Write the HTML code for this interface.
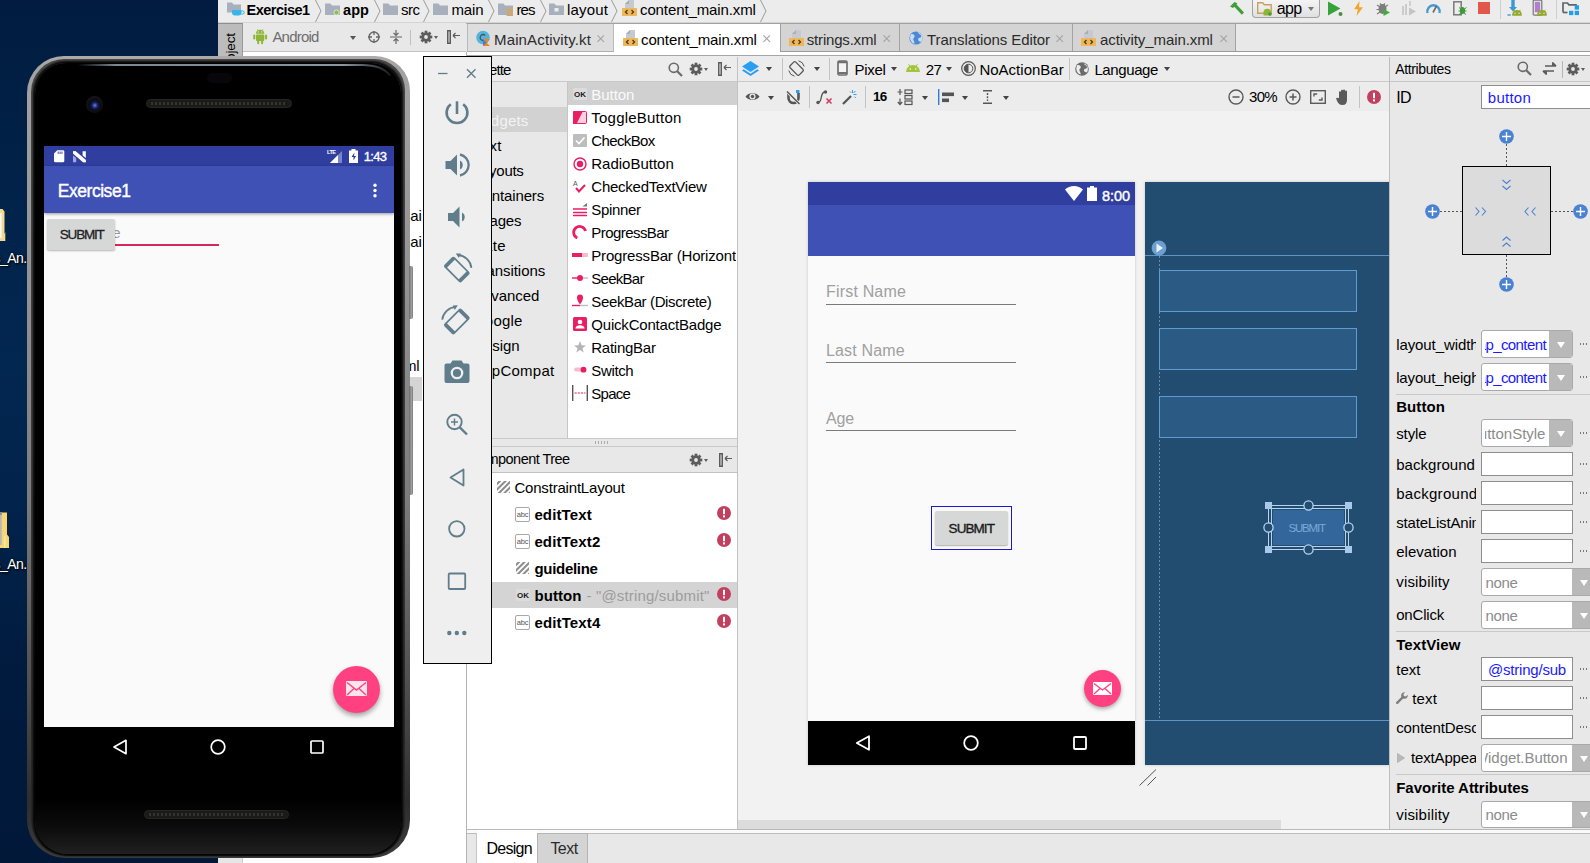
<!DOCTYPE html>
<html lang="en">
<head>
<meta charset="utf-8">
<title>Exercise1 - content_main.xml</title>
<style>
*{box-sizing:border-box;margin:0;padding:0}
html,body{width:1590px;height:863px;overflow:hidden}
body{position:relative;font-family:"Liberation Sans",sans-serif;font-size:15px;color:#000;background:#04214a}
.a{position:absolute}
.t{position:absolute;white-space:nowrap;font-size:15px;line-height:20px;color:#000}
svg{position:absolute;overflow:visible}
.tab{position:absolute;top:23px;height:29px;background:#d4d4d4;border-right:1px solid #a3a3a3;border-top:1px solid #a2a2a2}
.vs{position:absolute;width:1px;background:#c3c3c3}
.hs{position:absolute;height:1px;background:#c3c3c3}
.dd{position:absolute;width:0;height:0;border-left:3.5px solid transparent;border-right:3.5px solid transparent;border-top:4px solid #444}
.inp{position:absolute;background:#fff;border:1px solid #8e8e8e;height:24px}
.cb{position:absolute;background:#fff;border:1px solid #a9a9a9;border-radius:3px;height:28px;overflow:hidden}
.cb i{position:absolute;right:0;top:0;bottom:0;width:24px;background:#b9b9b9}
.cb i:after{content:"";position:absolute;left:7.500px;top:10.500px;border-left:4.500px solid transparent;border-right:4.500px solid transparent;border-top:6px solid #fff}
.dots{position:absolute;width:9px;height:2px;background:repeating-linear-gradient(90deg,#777 0 1px,transparent 1px 3px)}

</style>
</head>
<body>
<div class="a" style="left:0;top:0;width:240px;height:863px;background:linear-gradient(180deg,#011c40 0%,#011e43 8%,#02244c 28%,#022751 42%,#02234b 58%,#011b3e 78%,#011839 100%)"></div><svg style="left:0;top:208px" width="10" height="34" viewBox="0 0 10 34"><path d="M0 1h2.500l2 2.500V26L5.300 24v9H0z" fill="#f3d98c"/><rect x="0" y="5" width="1.600" height="25" fill="#f4f8fc"/></svg><svg style="left:0;top:511px" width="10" height="38" viewBox="0 0 10 38"><path d="M0 1.500h7v22l2 2.500V37H0z" fill="#f7d774"/><path d="M4 37V26.500l1.500-3V37z" fill="#fbe9a6"/><rect x="0" y="1" width="1.800" height="33" fill="#b8b8b8"/><rect x="0" y="1" width="1.800" height="3" fill="#8a8a8a"/></svg><span class="t" style="left:-6.5px;top:248.2px;font-size:14px;color:#fff;letter-spacing:-0.56px;text-shadow:1px 1px 2px #000,0 0 2px #000;">s_An.</span><span class="t" style="left:-6.5px;top:553.6px;font-size:14px;color:#fff;letter-spacing:-0.56px;text-shadow:1px 1px 2px #000,0 0 2px #000;">s_An.</span>
<div class="a" style="left:218px;top:0;width:1372px;height:863px;background:#ececec"></div>
<div class="a" style="left:218px;top:22px;width:1372px;height:1px;background:#d4d4d4"></div>
<svg style="left:227px;top:2px" width="17" height="15" viewBox="0 0 17 15"><path d="M0 0.5h5l1.5 2h7.5v8h-14z" fill="#a7b0bc"/><path d="M5 8h9.5v2.5a3 3 0 0 1-3 3h-3.5a3 3 0 0 1-3-3z" fill="#35b5e8"/><path d="M14.5 9h1.3a1 1 0 0 1 0 3h-1.5" fill="none" stroke="#35b5e8" stroke-width="1"/></svg>
<span class="t" style="left:246.5px;top:-0.0px;font-size:14.5px;font-weight:700;letter-spacing:-0.51px;">Exercise1</span>
<svg style="left:315px;top:0" width="7" height="22" viewBox="0 0 7 22"><path d="M0.5 0 L6 11 L0.5 22" fill="none" stroke="#9a9a9a" stroke-width="1"/></svg>
<svg style="left:324.5px;top:3px" width="15" height="12" viewBox="0 0 15 12"><path d="M0 0.5h5.5l1.5 2h8v9.5h-15z" fill="#a7b0bc"/><circle cx="11.5" cy="9.5" r="2.6" fill="#8bc34a" stroke="#ececec" stroke-width="0.8"/></svg>
<span class="t" style="left:343px;top:-0.0px;font-size:14.5px;font-weight:700;letter-spacing:0.07px;">app</span>
<svg style="left:373.5px;top:0" width="7" height="22" viewBox="0 0 7 22"><path d="M0.5 0 L6 11 L0.5 22" fill="none" stroke="#9a9a9a" stroke-width="1"/></svg>
<svg style="left:383px;top:3px" width="15" height="12" viewBox="0 0 15 12"><path d="M0 0.5h5.5l1.5 2h8v9.5h-15z" fill="#a7b0bc"/></svg>
<span class="t" style="left:401px;top:-0.0px;letter-spacing:-0.50px;">src</span>
<svg style="left:422.5px;top:0" width="7" height="22" viewBox="0 0 7 22"><path d="M0.5 0 L6 11 L0.5 22" fill="none" stroke="#9a9a9a" stroke-width="1"/></svg>
<svg style="left:432.5px;top:3px" width="15" height="12" viewBox="0 0 15 12"><path d="M0 0.5h5.5l1.5 2h8v9.5h-15z" fill="#a7b0bc"/></svg>
<span class="t" style="left:451.5px;top:-0.0px;letter-spacing:-0.13px;">main</span>
<svg style="left:488px;top:0" width="7" height="22" viewBox="0 0 7 22"><path d="M0.5 0 L6 11 L0.5 22" fill="none" stroke="#9a9a9a" stroke-width="1"/></svg>
<svg style="left:498px;top:3px" width="15" height="12" viewBox="0 0 15 12"><path d="M0 0.5h5.5l1.5 2h8v9.5h-15z" fill="#a7b0bc"/><path d="M8.5 6.5h6.5M8.5 8.5h6.5M8.5 10.5h6.5M8.5 12.5h6.5" stroke="#e8a33d" stroke-width="1"/></svg>
<span class="t" style="left:516.4px;top:-0.0px;letter-spacing:-0.81px;">res</span>
<svg style="left:539.5px;top:0" width="7" height="22" viewBox="0 0 7 22"><path d="M0.5 0 L6 11 L0.5 22" fill="none" stroke="#9a9a9a" stroke-width="1"/></svg>
<svg style="left:549px;top:3px" width="15" height="12" viewBox="0 0 15 12"><path d="M0 0.5h5.5l1.5 2h8v9.5h-15z" fill="#a7b0bc"/><rect x="5.5" y="5" width="4" height="3.5" fill="#ececec"/></svg>
<span class="t" style="left:567px;top:-0.0px;letter-spacing:0.16px;">layout</span>
<svg style="left:611px;top:0" width="7" height="22" viewBox="0 0 7 22"><path d="M0.5 0 L6 11 L0.5 22" fill="none" stroke="#9a9a9a" stroke-width="1"/></svg>
<svg style="left:622px;top:0px" width="15" height="16" viewBox="0 0 15 16"><path d="M7 0h5v8h-9v-4z" fill="#c6c9cf"/><path d="M3 4l4-4v4z" fill="#a9adb5"/><rect x="0" y="8" width="15" height="8" fill="#f0b65a"/><path d="M5.5 10 L3.5 12 L5.5 14 M9.5 10 L11.5 12 L9.5 14" fill="none" stroke="#4a3a1a" stroke-width="1.3"/></svg>
<span class="t" style="left:640px;top:-0.0px;letter-spacing:-0.11px;">content_main.xml</span>
<svg style="left:760px;top:0" width="7" height="22" viewBox="0 0 7 22"><path d="M0.5 0 L6 11 L0.5 22" fill="none" stroke="#9a9a9a" stroke-width="1"/></svg>
<svg style="left:1229px;top:1px" width="16" height="15" viewBox="0 0 16 15"><path d="M1 5.5L5.5 1l3 1.5-1 1 7.5 8-2.2 2.2-7.5-8-1.3 1.3z" fill="#3f9e3a"/></svg>
<div class="a" style="left:1252px;top:0;width:68px;height:18px;border:1px solid #a2a2a2;border-top:none;border-radius:0 0 4px 4px;background:linear-gradient(#f4f4f4,#e0e0e0)"></div>
<svg style="left:1257px;top:2px" width="17" height="14" viewBox="0 0 17 14"><path d="M0.7 0.7h5l1.5 2h7v8.6h-13.5z" fill="none" stroke="#c9a063" stroke-width="1.4"/><path d="M6.5 13.5v-3a3.7 3.7 0 0 1 7.4 0v3z" fill="#8fb536"/><circle cx="13" cy="12" r="1.8" fill="#4e9a34"/></svg>
<span class="t" style="left:1276.8px;top:-1.0px;font-size:16px;letter-spacing:-0.67px;">app</span>
<i class="dd" style="left:1307.5px;top:7px;border-top-color:#777"></i>
<svg style="left:1327px;top:1px" width="17" height="16" viewBox="0 0 17 16"><path d="M1 0.5L13.5 7.5L1 14.5z" fill="#35a33a"/><circle cx="13.5" cy="13" r="2" fill="#4b8d3e"/></svg>
<svg style="left:1353px;top:1px" width="11" height="15" viewBox="0 0 11 15"><path d="M6.5 0L1 8.3h3.8L3.5 15L10 6.2H6z" fill="#f2a52c"/></svg>
<svg style="left:1376px;top:1px" width="15" height="15" viewBox="0 0 15 15"><ellipse cx="6.5" cy="8" rx="4" ry="5" fill="#7d7d7d"/><path d="M1 4l3 2M12 4l-3 2M0.5 8.5h3M1 13l3-2M4 2.5l1.5 1.5M9 2.5L7.5 4" stroke="#7d7d7d" stroke-width="1.2"/><path d="M7.5 8L14 11.5L7.5 15z" fill="#3fae3f"/></svg>
<svg style="left:1402px;top:1px" width="15" height="15" viewBox="0 0 15 15"><path d="M1 5v9M4 3v11" stroke="#c4c4c4" stroke-width="1.6"/><path d="M7 6.5L14 10.5L7 14.5z" fill="#c4c4c4"/><path d="M8 0v5" stroke="#c4c4c4" stroke-width="1.4"/></svg>
<svg style="left:1426px;top:2px" width="15" height="12" viewBox="0 0 15 12"><path d="M1.5 11a6.2 6.2 0 1 1 12 0" fill="none" stroke="#4897d0" stroke-width="2.4"/><path d="M7 10.5L10.5 4" stroke="#6a6a6a" stroke-width="1.6"/></svg>
<svg style="left:1453px;top:1px" width="14" height="15" viewBox="0 0 14 15"><rect x="0.8" y="0.8" width="7.4" height="13" fill="none" stroke="#7a7a7a" stroke-width="1.5"/><ellipse cx="9.5" cy="9.5" rx="2.6" ry="3.6" fill="#3d9b3a"/><path d="M6 6.5l2 1.5M13.5 6.5l-2 1.5M5.5 10h2M13.5 10h-2M6 13.5l2-1.5M13 13.5l-2-1.5" stroke="#3d9b3a" stroke-width="1"/></svg>
<div class="a" style="left:1478px;top:2px;width:12px;height:12px;background:#e0574c"></div>
<div class="vs" style="left:1500px;top:0;height:19px;background:#cfcfcf"></div>
<svg style="left:1507px;top:0" width="16" height="17" viewBox="0 0 16 17"><path d="M4.300 0h3.400v7h2.300L6 11.500 2 7h2.300z" fill="#3b97d6"/><path d="M.5 15h3.200" stroke="#3b97d6" stroke-width="1.400"/><path d="M5.200 15.800v-1.300a4.800 4.600 0 0 1 9.600 0v1.300z" fill="#94a82e"/><path d="M6.600 9.800l1.200 1.500M13.400 9.800l-1.200 1.500" stroke="#94a82e" stroke-width=".9"/><circle cx="8" cy="13.300" r=".7" fill="#ececec"/><circle cx="12" cy="13.300" r=".7" fill="#ececec"/></svg>
<svg style="left:1532px;top:0" width="16" height="17" viewBox="0 0 16 17"><rect x="1.200" y=".2" width="8.600" height="15" rx="1" fill="none" stroke="#777" stroke-width="1.200"/><rect x="2.800" y="1.800" width="5.400" height="10.500" fill="#b07fcf"/><path d="M5.200 15.800v-1.300a4.800 4.600 0 0 1 9.600 0v1.300z" fill="#94a82e"/><path d="M6.600 9.800l1.200 1.500M13.400 9.800l-1.200 1.500" stroke="#94a82e" stroke-width=".9"/><circle cx="8" cy="13.300" r=".7" fill="#ececec"/><circle cx="12" cy="13.300" r=".7" fill="#ececec"/></svg>
<div class="vs" style="left:1556px;top:0;height:19px;background:#cfcfcf"></div>
<svg style="left:1562px;top:2px" width="18" height="14" viewBox="0 0 18 14"><path d="M1 10.500V1h4.500l1.400 1.800H14v2.500" fill="none" stroke="#5f646b" stroke-width="1.700"/><path d="M1 10.500h4.500" stroke="#5f646b" stroke-width="1.700"/><rect x="7" y="8.800" width="4.300" height="4.300" fill="#1f9fe8"/><rect x="12.700" y="8.800" width="4.300" height="4.300" fill="#1f9fe8"/><rect x="12.700" y="3.300" width="4.300" height="4.300" fill="#1f9fe8"/></svg>
<div class="a" style="left:218px;top:23px;width:1372px;height:29px;background:#e8e8e8"></div>
<div class="a" style="left:218px;top:23px;width:25px;height:840px;background:#e6e6e6;border-right:1px solid #cdcdcd"></div>
<div class="a" style="left:218px;top:23px;width:25px;height:100px;background:#bcbcbc;border-top:1px solid #8e8e8e;border-right:1px solid #9a9a9a"></div>
<div class="a" style="left:243px;top:23px;width:224px;height:1px;background:#b2b2b2"></div>
<span class="t" style="left:220.500px;top:88.500px;font-size:13.500px;transform:rotate(-90deg);transform-origin:0 0;letter-spacing:-0.1px">1: Project</span>
<div class="a" style="left:243px;top:23px;width:223px;height:29px;background:#e8e8e8;border-bottom:1px solid #c2c2c2"></div>
<svg style="left:252.800px;top:28.500px" width="14.300" height="15.700" viewBox="0 0 15 17"><path d="M3 5.2a4.5 4.3 0 0 1 9 0z" fill="#8fb536"/><rect x="3" y="6" width="9" height="7" rx="1" fill="#8fb536"/><rect x="0" y="6" width="2.2" height="5.5" rx="1.1" fill="#8fb536"/><rect x="12.8" y="6" width="2.2" height="5.5" rx="1.1" fill="#8fb536"/><rect x="4.3" y="12" width="2.2" height="4.5" rx="1.1" fill="#8fb536"/><rect x="8.5" y="12" width="2.2" height="4.5" rx="1.1" fill="#8fb536"/><path d="M4.5 0.3l1.2 1.8M10.5 0.3L9.3 2.1" stroke="#8fb536" stroke-width="0.8"/><circle cx="5.600" cy="3.200" r=".7" fill="#e8e8e8"/><circle cx="9.400" cy="3.200" r=".7" fill="#e8e8e8"/></svg>
<span class="t" style="left:272.4px;top:27.4px;color:#6e6e6e;letter-spacing:-0.80px;">Android</span>
<i class="dd" style="left:350px;top:36px;border-top-color:#555"></i>
<svg style="left:368px;top:31px" width="12" height="12" viewBox="0 0 12 12"><circle cx="6" cy="6" r="5" fill="none" stroke="#666" stroke-width="1.4"/><path d="M6 0v4M6 8v4M0 6h4M8 6h4" stroke="#666" stroke-width="1.3"/></svg>
<svg style="left:390px;top:30px" width="12" height="14" viewBox="0 0 12 14"><path d="M0 7h12M6 0v5M6 14v-5M3.5 2.8L6 5.3L8.5 2.8M3.5 11.2L6 8.7l2.5 2.5" stroke="#666" stroke-width="1.2" fill="none"/></svg>
<div class="vs" style="left:410px;top:30px;height:15px;background:#c0c0c0"></div>
<svg style="left:418.5px;top:30px" width="14" height="14" viewBox="-7 -7 14 14"><g fill="#5c5c5c"><rect x="-1.4" y="-6.3" width="2.8" height="3" transform="rotate(0)"/><rect x="-1.4" y="-6.3" width="2.8" height="3" transform="rotate(45)"/><rect x="-1.4" y="-6.3" width="2.8" height="3" transform="rotate(90)"/><rect x="-1.4" y="-6.3" width="2.8" height="3" transform="rotate(135)"/><rect x="-1.4" y="-6.3" width="2.8" height="3" transform="rotate(180)"/><rect x="-1.4" y="-6.3" width="2.8" height="3" transform="rotate(225)"/><rect x="-1.4" y="-6.3" width="2.8" height="3" transform="rotate(270)"/><rect x="-1.4" y="-6.3" width="2.8" height="3" transform="rotate(315)"/><circle r="4.6"/></g><circle r="1.9" fill="#e8e8e8"/></svg><i class="dd" style="left:433.5px;top:36px;border-left-width:2.5px;border-right-width:2.5px;border-top-width:3px;border-top-color:#5c5c5c"></i>
<svg style="left:447px;top:30px" width="13" height="14" viewBox="0 0 13 14"><rect x="0.75" y="0.75" width="2.5" height="12.5" fill="none" stroke="#5c5c5c" stroke-width="1.5"/><path d="M6 5.5h7M6 5.5l2.5-2.5M6 5.5l2.5 2.5" stroke="#5c5c5c" stroke-width="1.2" fill="none"/></svg>
<div class="tab" style="left:467px;width:147px;background:#dedede;border-left:1px solid #b9b9b9;border-right-color:#b9b9b9"></div>
<div class="tab" style="left:614px;width:166px;background:#fff;border-right:none;border-top-color:#a2a2a2;height:32px"></div>
<div class="tab" style="left:780px;width:120px;border-left:1px solid #a3a3a3"></div>
<div class="tab" style="left:900px;width:173px"></div>
<div class="tab" style="left:1073px;width:163px"></div>
<div class="a" style="left:467px;top:51px;width:147px;height:1px;background:#b0b0b0"></div>
<div class="a" style="left:780px;top:51px;width:810px;height:1px;background:#9b9b9b"></div>
<div class="a" style="left:467px;top:52px;width:1123px;height:3px;background:#fff"></div>
<div class="a" style="left:467px;top:23px;width:1123px;height:1px;background:#a2a2a2"></div>
<div class="a" style="left:467px;top:55px;width:1123px;height:1px;background:#a6a6a6"></div>
<svg style="left:476px;top:30px" width="15" height="16" viewBox="0 0 15 16"><circle cx="7" cy="7.5" r="6.8" fill="#56b4d9"/><path d="M9.3 5.4a3 3 0 1 0 0 4.2" fill="none" stroke="#3d5a66" stroke-width="1.3"/><path d="M7 16v-7h7l-3.5 3.5L14 16z" fill="#f58220"/><path d="M7 16l3.5-3.5L7 9z" fill="#3f7fe0"/></svg>
<span class="t" style="left:494px;top:29.9px;color:#2b2b2b;letter-spacing:0.15px;">MainActivity.kt</span>
<svg style="left:597.2px;top:34.7px" width="7.400" height="7.400" viewBox="0 0 8 8"><path d="M0.500 0.500L7.500 7.500M7.500 0.500L0.500 7.500" stroke="#a4a4a4" stroke-width="1.200"/></svg>
<svg style="left:622.5px;top:30px" width="15" height="16" viewBox="0 0 15 16"><path d="M7 0h5v8h-9v-4z" fill="#c6c9cf"/><path d="M3 4l4-4v4z" fill="#a9adb5"/><rect x="0" y="8" width="15" height="8" fill="#f0b65a"/><path d="M5.5 10 L3.5 12 L5.5 14 M9.5 10 L11.5 12 L9.5 14" fill="none" stroke="#4a3a1a" stroke-width="1.3"/></svg>
<span class="t" style="left:641px;top:29.9px;letter-spacing:-0.11px;">content_main.xml</span>
<svg style="left:763.2px;top:34.7px" width="7.400" height="7.400" viewBox="0 0 8 8"><path d="M0.500 0.500L7.500 7.500M7.500 0.500L0.500 7.500" stroke="#a4a4a4" stroke-width="1.200"/></svg>
<svg style="left:788.5px;top:30px" width="15" height="16" viewBox="0 0 15 16"><path d="M7 0h5v8h-9v-4z" fill="#c6c9cf"/><path d="M3 4l4-4v4z" fill="#a9adb5"/><rect x="0" y="8" width="15" height="8" fill="#f0b65a"/><path d="M5.5 10 L3.5 12 L5.5 14 M9.5 10 L11.5 12 L9.5 14" fill="none" stroke="#4a3a1a" stroke-width="1.3"/></svg>
<span class="t" style="left:806.8px;top:29.9px;color:#2b2b2b;letter-spacing:-0.19px;">strings.xml</span>
<svg style="left:883.2px;top:34.7px" width="7.400" height="7.400" viewBox="0 0 8 8"><path d="M0.500 0.500L7.500 7.500M7.500 0.500L0.500 7.500" stroke="#a4a4a4" stroke-width="1.200"/></svg>
<svg style="left:909px;top:31px" width="14" height="14" viewBox="0 0 14 14"><circle cx="7" cy="7" r="6.600" fill="#4a8ad4"/><path d="M2 3.200c1.800-.4 3.600.4 3.600 2S3.800 7 4.200 8.600s1.600 2 1.200 4.200C3 12 1 9.500 1 7c0-1.500.4-2.800 1-3.800zM8.500 1c1 .8 1 1.800 2.200 2.200s2 1.600 1.400 2.800-2.200.2-2.800 1.600.2 2.400 1.400 2.800 1.200.8 1.600.4C13 9.500 13.600 8.300 13.600 7 13.600 3.800 11.300 1.300 8.500 1z" fill="#c9dcf3"/></svg>
<span class="t" style="left:927px;top:29.9px;color:#2b2b2b;letter-spacing:-0.08px;">Translations Editor</span>
<svg style="left:1056.2px;top:34.7px" width="7.400" height="7.400" viewBox="0 0 8 8"><path d="M0.500 0.500L7.500 7.500M7.500 0.500L0.500 7.500" stroke="#a4a4a4" stroke-width="1.200"/></svg>
<svg style="left:1081px;top:30px" width="15" height="16" viewBox="0 0 15 16"><path d="M7 0h5v8h-9v-4z" fill="#c6c9cf"/><path d="M3 4l4-4v4z" fill="#a9adb5"/><rect x="0" y="8" width="15" height="8" fill="#f0b65a"/><path d="M5.5 10 L3.5 12 L5.5 14 M9.5 10 L11.5 12 L9.5 14" fill="none" stroke="#4a3a1a" stroke-width="1.3"/></svg>
<span class="t" style="left:1100px;top:29.9px;color:#2b2b2b;letter-spacing:-0.08px;">activity_main.xml</span>
<svg style="left:1220.2px;top:34.7px" width="7.400" height="7.400" viewBox="0 0 8 8"><path d="M0.500 0.500L7.500 7.500M7.500 0.500L0.500 7.500" stroke="#a4a4a4" stroke-width="1.200"/></svg>
<div class="a" style="left:467px;top:56px;width:1123px;height:25px;background:#ececec"></div>
<div class="hs" style="left:467px;top:81px;width:923px;background:#c9c9c9"></div>
<div class="a" style="left:738px;top:82px;width:652px;height:29px;background:#ececec"></div>
<div class="hs" style="left:738px;top:110.500px;width:652px;background:#cacaca"></div>
<span class="t" style="left:470px;top:60.1px;letter-spacing:-0.89px;">Palette</span>
<svg style="left:667.5px;top:62px" width="15" height="15" viewBox="0 0 15 15"><circle cx="5.8" cy="5.8" r="4.6" fill="none" stroke="#6a6a6a" stroke-width="1.6"/><path d="M9.2 9.2L14 14" stroke="#6a6a6a" stroke-width="2.2"/></svg>
<svg style="left:689px;top:62px" width="14" height="14" viewBox="-7 -7 14 14"><g fill="#5c5c5c"><rect x="-1.4" y="-6.3" width="2.8" height="3" transform="rotate(0)"/><rect x="-1.4" y="-6.3" width="2.8" height="3" transform="rotate(45)"/><rect x="-1.4" y="-6.3" width="2.8" height="3" transform="rotate(90)"/><rect x="-1.4" y="-6.3" width="2.8" height="3" transform="rotate(135)"/><rect x="-1.4" y="-6.3" width="2.8" height="3" transform="rotate(180)"/><rect x="-1.4" y="-6.3" width="2.8" height="3" transform="rotate(225)"/><rect x="-1.4" y="-6.3" width="2.8" height="3" transform="rotate(270)"/><rect x="-1.4" y="-6.3" width="2.8" height="3" transform="rotate(315)"/><circle r="4.6"/></g><circle r="1.9" fill="#e8e8e8"/></svg><i class="dd" style="left:704px;top:68px;border-left-width:2.5px;border-right-width:2.5px;border-top-width:3px;border-top-color:#5c5c5c"></i>
<svg style="left:718px;top:62px" width="13" height="14" viewBox="0 0 13 14"><rect x="0.75" y="0.75" width="2.5" height="12.5" fill="none" stroke="#5c5c5c" stroke-width="1.5"/><path d="M6 5.5h7M6 5.5l2.5-2.5M6 5.5l2.5 2.5" stroke="#5c5c5c" stroke-width="1.2" fill="none"/></svg>
<svg style="left:742px;top:61px" width="17" height="15" viewBox="0 0 17 15"><path d="M8.5 0L17 5.500L8.5 11L0 5.500z" fill="#2a9df4"/><path d="M1.700 8.300L8.500 12.700l6.800-4.400L17 9.400 8.5 15 0 9.400z" fill="#2a9df4"/></svg>
<i class="dd" style="left:766px;top:67px;border-top-color:#444"></i>
<div class="vs" style="left:782px;top:58px;height:22px"></div>
<svg style="left:788px;top:60px" width="17" height="17" viewBox="0 0 17 17"><rect x="4.5" y="2" width="8" height="13" rx="1.5" fill="none" stroke="#555" stroke-width="1.3" transform="rotate(-45 8.5 8.5)"/><path d="M10.500 .8a7.500 7.500 0 0 1 5.700 5.700M6.500 16.200a7.500 7.500 0 0 1-5.700-5.700" fill="none" stroke="#555" stroke-width="1"/></svg>
<i class="dd" style="left:813.5px;top:67px;border-top-color:#444"></i>
<div class="vs" style="left:829px;top:58px;height:22px"></div>
<svg style="left:837px;top:60px" width="11" height="16" viewBox="0 0 11 16"><rect x="1" y="1" width="9" height="14" rx="1.200" fill="#f4f4f4" stroke="#707070" stroke-width="1.700"/><path d="M1 2.200h9M1 13h9" stroke="#707070" stroke-width="2.200"/></svg>
<span class="t" style="left:854.6px;top:60.1px;letter-spacing:-0.32px;">Pixel</span>
<i class="dd" style="left:890.5px;top:67px;border-top-color:#444"></i>
<svg style="left:906px;top:64px" width="14" height="8" viewBox="0 0 14 8"><path d="M0 8a7 7 0 0 1 14 0z" fill="#a3c43c"/><path d="M2.500 .2l1.700 2M11.500 .2l-1.700 2" stroke="#a3c43c" stroke-width="1"/><circle cx="4.300" cy="5" r=".8" fill="#fff"/><circle cx="9.700" cy="5" r=".8" fill="#fff"/></svg>
<span class="t" style="left:925.8px;top:60.1px;letter-spacing:-0.74px;">27</span>
<i class="dd" style="left:946px;top:67px;border-top-color:#444"></i>
<svg style="left:961px;top:61px" width="15" height="15" viewBox="0 0 15 15"><circle cx="7.500" cy="7.500" r="6.800" fill="none" stroke="#555" stroke-width="1.200"/><circle cx="7.500" cy="7.500" r="4.300" fill="none" stroke="#555" stroke-width="1"/><path d="M7.500 3.200a4.300 4.300 0 0 0 0 8.600z" fill="#555"/></svg>
<span class="t" style="left:979.4px;top:60.1px;letter-spacing:0.01px;">NoActionBar</span>
<div class="vs" style="left:1069px;top:58px;height:22px"></div>
<svg style="left:1075px;top:61.500px" width="14" height="14" viewBox="0 0 14 14"><circle cx="7" cy="7" r="6.800" fill="#6b6b6b"/><path d="M2.200 3c1.800-.4 3.600.4 3.600 2S4 6.800 4.400 8.400s1.600 2 1.200 4.200C3.200 11.800 1.300 9.500 1.300 7c0-1.500.3-2.800.9-4zM8.500 1.300c1 .8 1 1.600 2 2s1.800 1.500 1.300 2.600-2 .2-2.600 1.500.2 2.300 1.300 2.600 1.100.8 1.500.4C12.600 9.500 12.900 8.300 12.900 7c0-3-1.800-5.300-4.400-5.700z" fill="#ececec"/></svg>
<span class="t" style="left:1094.4px;top:60.1px;letter-spacing:-0.39px;">Language</span>
<i class="dd" style="left:1163.5px;top:67px;border-top-color:#444"></i>
<div class="a" style="left:0;top:.8px;width:0;height:0">
<svg style="left:745px;top:90px" width="15" height="11" viewBox="0 0 15 11"><path d="M0.500 5.500C3 1 12 1 14.500 5.500 12 10 3 10 .500 5.500z" fill="#555"/><circle cx="7.500" cy="5.500" r="3.100" fill="#ececec"/><circle cx="7.500" cy="5.500" r="1.700" fill="#555"/></svg>
<i class="dd" style="left:768px;top:95px;border-top-color:#444"></i>
<svg style="left:786px;top:88px" width="15" height="16" viewBox="0 0 15 16"><path d="M2.500 4v5a5 5 0 0 0 10 0V4" fill="none" stroke="#555" stroke-width="2.600"/><path d="M0.500 2L14 15.500" stroke="#ececec" stroke-width="3"/><path d="M1 2.500L13.500 15" stroke="#555" stroke-width="1.400"/><rect x="10" y="1" width="3.500" height="3" fill="#2a9df4"/></svg>
<div class="vs" style="left:809px;top:85px;height:22px"></div>
<svg style="left:816px;top:88px" width="18" height="16" viewBox="0 0 18 16"><path d="M2 13.500c5 0 1.500-10.500 7-10.500" fill="none" stroke="#555" stroke-width="1.300"/><circle cx="2" cy="13.500" r="1.700" fill="#555"/><circle cx="9.500" cy="3" r="1.700" fill="#555"/><path d="M10.500 9.500l5 5M15.500 9.500l-5 5" stroke="#d4365c" stroke-width="1.500"/></svg>
<svg style="left:842px;top:88px" width="15" height="16" viewBox="0 0 15 16"><path d="M1 15L9 7" stroke="#555" stroke-width="2.300"/><path d="M10.500 1v3M14.500 5.500h-3M13.500 2l-2 2M8 2.500l1.200 1.200M13.800 9l-1.300-1.300" stroke="#2a9df4" stroke-width="1"/></svg>
<div class="vs" style="left:865px;top:85px;height:22px"></div>
<span class="t" style="left:873px;top:86.5px;font-size:13.5px;font-weight:700;letter-spacing:-0.77px;">16</span>
<svg style="left:897px;top:88px" width="16" height="16" viewBox="0 0 16 16"><path d="M3 0v6M0.500 3h5M3 9.500v6M.8 13L3 15.500 5.200 13M.8 12" stroke="#555" stroke-width="1.200" fill="none"/><rect x="8" y="1" width="7" height="3.500" fill="none" stroke="#555" stroke-width="1.200"/><rect x="8" y="6.500" width="7" height="3.500" fill="none" stroke="#555" stroke-width="1.200"/><rect x="8" y="12" width="7" height="3.500" fill="none" stroke="#555" stroke-width="1.200"/></svg>
<i class="dd" style="left:921.5px;top:95px;border-top-color:#444"></i>
<svg style="left:938px;top:88px" width="17" height="16" viewBox="0 0 17 16"><path d="M0.700 0v16" stroke="#2a7fd4" stroke-width="1.400"/><rect x="4" y="3.500" width="12" height="3.600" fill="#555"/><rect x="4" y="9.500" width="7" height="3.600" fill="#555"/></svg>
<i class="dd" style="left:962px;top:95px;border-top-color:#444"></i>
<svg style="left:982px;top:89px" width="11" height="14" viewBox="0 0 11 14"><path d="M1 .800h9M1 13.200h9" stroke="#555" stroke-width="1.600"/><path d="M5.500 3v8" stroke="#555" stroke-width="1.400" stroke-dasharray="2 1.300"/></svg>
<i class="dd" style="left:1003px;top:95px;border-top-color:#444"></i>
<svg style="left:1228px;top:88px" width="16" height="16" viewBox="0 0 16 16"><circle cx="8" cy="8" r="7" fill="none" stroke="#5a5a5a" stroke-width="1.400"/><path d="M4.500 8h7" stroke="#5a5a5a" stroke-width="1.500"/></svg>
<span class="t" style="left:1249px;top:86.5px;letter-spacing:-0.68px;">30%</span>
<svg style="left:1285px;top:88px" width="16" height="16" viewBox="0 0 16 16"><circle cx="8" cy="8" r="7" fill="none" stroke="#5a5a5a" stroke-width="1.400"/><path d="M4.500 8h7M8 4.500v7" stroke="#5a5a5a" stroke-width="1.500"/></svg>
<svg style="left:1310px;top:89px" width="16" height="14" viewBox="0 0 16 14"><rect x=".7" y=".7" width="14.600" height="12.600" fill="none" stroke="#5a5a5a" stroke-width="1.400"/><path d="M4 6.500V4h3.200M12 7.500V10H8.800" fill="none" stroke="#5a5a5a" stroke-width="1.400"/></svg>
<svg style="left:1336px;top:88px" width="14" height="16" viewBox="0 0 14 16"><path d="M3 9V3.200a1 1 0 0 1 2 0V1.800a1 1 0 0 1 2 0v-.3a1 1 0 0 1 2 0v1a1 1 0 0 1 2 0V11c0 3-1.500 5-4.500 5S2.500 14.500 1 12L.2 9.800a1 1 0 0 1 1.700-.8z" fill="#5a5a5a"/></svg>
<div class="vs" style="left:1359px;top:85px;height:22px"></div>
<svg style="left:1367px;top:89px" width="14" height="14" viewBox="0 0 14 14"><circle cx="7" cy="7" r="7" fill="#c2405f"/><rect x="6" y="2.800" width="2" height="5.400" fill="#fff"/><rect x="6" y="9.400" width="2" height="2" fill="#fff"/></svg>
</div>
<div class="a" style="left:467px;top:82px;width:270px;height:747px;background:#fff"></div>
<div class="vs" style="left:466px;top:52px;height:811px;background:#b4b4b4"></div>
<div class="vs" style="left:737px;top:57px;height:772px;background:#c2c2c2"></div>
<div class="a" style="left:467px;top:82px;width:100px;height:356px;background:#e8e8e8"></div>
<div class="vs" style="left:567px;top:82px;height:356px;background:#c6c6c6"></div>
<div class="a" style="left:467px;top:107px;width:100px;height:25px;background:#d2d2d2"></div>
<span class="t" style="left:473px;top:110.9px;color:#f4f4f4;letter-spacing:0.19px;">Widgets</span>
<span class="t" style="left:473px;top:135.8px;letter-spacing:0.27px;">Text</span>
<span class="t" style="left:473px;top:160.8px;letter-spacing:-0.28px;">Layouts</span>
<span class="t" style="left:473px;top:185.8px;letter-spacing:-0.15px;">Containers</span>
<span class="t" style="left:473px;top:211.0px;letter-spacing:-0.12px;">Images</span>
<span class="t" style="left:473px;top:236.0px;letter-spacing:0.28px;">Date</span>
<span class="t" style="left:473px;top:260.9px;letter-spacing:-0.06px;">Transitions</span>
<span class="t" style="left:473px;top:285.9px;letter-spacing:-0.04px;">Advanced</span>
<span class="t" style="left:473px;top:311.0px;letter-spacing:0.19px;">Google</span>
<span class="t" style="left:473px;top:336.1px;letter-spacing:-0.00px;">Design</span>
<span class="t" style="left:473px;top:361.2px;letter-spacing:0.24px;">AppCompat</span>
<div class="a" style="left:568px;top:82px;width:169px;height:23px;background:#d0d0d0"></div>
<svg style="left:573px;top:88px" width="14" height="12" viewBox="0 0 14 12"><rect width="14" height="12" rx="1.500" fill="#dcdcdc"/><text x="7" y="9.300" font-family="Liberation Sans,sans-serif" font-size="8" font-weight="700" text-anchor="middle" fill="#1a1a1a">OK</text></svg>
<span class="t" style="left:591.3px;top:84.7px;color:#fafafa;letter-spacing:-0.05px;">Button</span>
<span class="t" style="left:591.3px;top:107.9px;letter-spacing:0.22px;">ToggleButton</span>
<span class="t" style="left:591.3px;top:131.1px;letter-spacing:-0.63px;">CheckBox</span>
<span class="t" style="left:591.3px;top:154.0px;letter-spacing:-0.01px;">RadioButton</span>
<span class="t" style="left:591.3px;top:177.1px;letter-spacing:-0.24px;">CheckedTextView</span>
<span class="t" style="left:591.3px;top:200.2px;letter-spacing:-0.33px;">Spinner</span>
<span class="t" style="left:591.3px;top:223.1px;letter-spacing:-0.56px;">ProgressBar</span>
<span class="t" style="left:591.3px;top:246.1px;letter-spacing:-0.18px;">ProgressBar (Horizontal)</span>
<span class="t" style="left:591.3px;top:268.5px;letter-spacing:-0.74px;">SeekBar</span>
<span class="t" style="left:591.3px;top:291.6px;letter-spacing:-0.37px;">SeekBar (Discrete)</span>
<span class="t" style="left:591.3px;top:314.8px;letter-spacing:-0.20px;">QuickContactBadge</span>
<span class="t" style="left:591.3px;top:338.0px;letter-spacing:-0.26px;">RatingBar</span>
<span class="t" style="left:591.3px;top:360.8px;letter-spacing:-0.36px;">Switch</span>
<span class="t" style="left:591.3px;top:383.8px;letter-spacing:-0.73px;">Space</span>
<svg style="left:573px;top:111px" width="14" height="13" viewBox="0 0 14 13"><rect x=".5" y=".5" width="13" height="12" rx="1" fill="#fbd0de" stroke="#e91e63"/><path d="M0 13V1a1 1 0 0 1 1-1h9L3.500 13z" fill="#e91e63"/></svg>
<svg style="left:573px;top:134px" width="14" height="13" viewBox="0 0 14 13"><rect width="14" height="13" rx="1" fill="#bdbdbd"/><path d="M3 6.500l3 3 5.500-6" fill="none" stroke="#fff" stroke-width="1.600"/></svg>
<svg style="left:573px;top:157px" width="14" height="14" viewBox="0 0 14 14"><circle cx="7" cy="7" r="6" fill="none" stroke="#e91e63" stroke-width="1.400"/><circle cx="7" cy="7" r="3.200" fill="#e91e63"/></svg>
<svg style="left:573px;top:180px" width="15" height="13" viewBox="0 0 15 13"><text x="0" y="6" font-family="Liberation Sans,sans-serif" font-size="7" fill="#555">A</text><path d="M3 8l3 3.500 6-6.500" fill="none" stroke="#e91e63" stroke-width="2"/></svg>
<svg style="left:573px;top:203px" width="14" height="13" viewBox="0 0 14 13"><path d="M0 6h14M0 9.500h14M0 12.500h14" stroke="#e91e63" stroke-width="1.600"/><path d="M9.500 3.500H14V0z" fill="#777"/></svg>
<svg style="left:573px;top:226px" width="14" height="14" viewBox="0 0 14 14"><path d="M4.300 12A6 6 0 1 1 12.500 5" fill="none" stroke="#e91e63" stroke-width="2.800"/></svg>
<svg style="left:572px;top:253px" width="16" height="4" viewBox="0 0 16 4"><rect width="16" height="4" fill="#f8bbd0"/><rect width="10" height="4" fill="#e91e63"/></svg>
<svg style="left:572px;top:274px" width="16" height="8" viewBox="0 0 16 8"><path d="M0 4h8" stroke="#e91e63" stroke-width="1.400"/><path d="M8 4h8" stroke="#bdbdbd" stroke-width="1.400"/><circle cx="8" cy="4" r="3" fill="#e91e63"/></svg>
<svg style="left:572px;top:294px" width="16" height="13" viewBox="0 0 16 13"><path d="M0 11.500h8" stroke="#e91e63" stroke-width="1.400"/><path d="M8 11.500h8" stroke="#bdbdbd" stroke-width="1.400"/><path d="M8 10.500C5 6.500 5 4 5 3.500a3 3 0 0 1 6 0c0 .5 0 3-3 7z" fill="#e91e63"/></svg>
<svg style="left:573px;top:317px" width="14" height="14" viewBox="0 0 14 14"><rect width="14" height="14" rx="1.500" fill="#e91e63"/><circle cx="7" cy="5" r="2.300" fill="#fff"/><path d="M2.500 11.500c0-2.500 2.500-3.300 4.500-3.300s4.500.8 4.500 3.300z" fill="#fff"/></svg>
<svg style="left:574px;top:341px" width="12" height="12" viewBox="0 0 12 12"><path d="M6 0l1.600 4.200 4.400.2-3.500 2.800 1.200 4.300L6 9l-3.700 2.500 1.200-4.300L0 4.400l4.400-.2z" fill="#b5b5b5"/></svg>
<svg style="left:574px;top:366px" width="13" height="8" viewBox="0 0 13 8"><rect y="1.500" width="10" height="4" rx="2" fill="#f8bbd0"/><circle cx="9.500" cy="3.700" r="2.900" fill="#e91e63"/></svg>
<svg style="left:572px;top:385px" width="16" height="16" viewBox="0 0 16 16"><path d="M.700 0v16M15.300 0v16" stroke="#555" stroke-width="1.400"/><path d="M2.500 8h11" stroke="#e91e63" stroke-width="1.200" stroke-dasharray="2.200 1"/></svg>
<div class="a" style="left:467px;top:438px;width:270px;height:9px;background:#e8e8e8;border-top:1px solid #c8c8c8;border-bottom:1px solid #c8c8c8"></div>
<div class="a" style="left:595px;top:441px;width:14px;height:3px;background:repeating-linear-gradient(90deg,#aaa 0 1px,transparent 1px 3px)"></div>
<div class="a" style="left:467px;top:447px;width:270px;height:26px;background:#e8e8e8;border-bottom:1px solid #c2c2c2"></div>
<span class="t" style="left:469px;top:449.4px;font-size:14.5px;letter-spacing:-0.53px;">Component Tree</span>
<svg style="left:689px;top:452.5px" width="14" height="14" viewBox="-7 -7 14 14"><g fill="#5c5c5c"><rect x="-1.4" y="-6.3" width="2.8" height="3" transform="rotate(0)"/><rect x="-1.4" y="-6.3" width="2.8" height="3" transform="rotate(45)"/><rect x="-1.4" y="-6.3" width="2.8" height="3" transform="rotate(90)"/><rect x="-1.4" y="-6.3" width="2.8" height="3" transform="rotate(135)"/><rect x="-1.4" y="-6.3" width="2.8" height="3" transform="rotate(180)"/><rect x="-1.4" y="-6.3" width="2.8" height="3" transform="rotate(225)"/><rect x="-1.4" y="-6.3" width="2.8" height="3" transform="rotate(270)"/><rect x="-1.4" y="-6.3" width="2.8" height="3" transform="rotate(315)"/><circle r="4.6"/></g><circle r="1.9" fill="#e8e8e8"/></svg><i class="dd" style="left:704px;top:458.5px;border-left-width:2.5px;border-right-width:2.5px;border-top-width:3px;border-top-color:#5c5c5c"></i>
<svg style="left:718.5px;top:452.5px" width="13" height="14" viewBox="0 0 13 14"><rect x="0.75" y="0.75" width="2.5" height="12.5" fill="none" stroke="#5c5c5c" stroke-width="1.5"/><path d="M6 5.5h7M6 5.5l2.5-2.5M6 5.5l2.5 2.5" stroke="#5c5c5c" stroke-width="1.2" fill="none"/></svg>
<div class="a" style="left:467px;top:582px;width:270px;height:26px;background:#d4d4d4"></div>
<svg style="left:497px;top:481px" width="13" height="12" viewBox="0 0 13 12"><defs><clipPath id="c497481"><rect width="13" height="12"/></clipPath></defs><g clip-path="url(#c497481)" stroke="#8e8e8e" stroke-width="2.100"><path d="M-2 5L5 -2M-2 10.500L10.500 -2M0 14L15 -1M5.500 14L15 4.500M11 14l4-4"/></g></svg>
<span class="t" style="left:514.4px;top:477.8px;letter-spacing:-0.19px;">ConstraintLayout</span>
<svg style="left:515px;top:506.5px" width="15" height="15" viewBox="0 0 15 15"><rect x=".500" y=".500" width="14" height="14" rx="1.500" fill="#fff" stroke="#a8a8a8"/><text x="7.500" y="10.300" font-family="Liberation Sans,sans-serif" font-size="7.500" text-anchor="middle" fill="#555" letter-spacing="-.2">abc</text></svg>
<span class="t" style="left:534.4px;top:504.5px;font-weight:700;letter-spacing:0.12px;">editText</span>
<svg style="left:717px;top:506px" width="14" height="14" viewBox="0 0 14 14"><circle cx="7" cy="7" r="7" fill="#c2405f"/><rect x="6" y="2.800" width="2" height="5.400" fill="#fff"/><rect x="6" y="9.400" width="2" height="2" fill="#fff"/></svg>
<svg style="left:515px;top:533.5px" width="15" height="15" viewBox="0 0 15 15"><rect x=".500" y=".500" width="14" height="14" rx="1.500" fill="#fff" stroke="#a8a8a8"/><text x="7.500" y="10.300" font-family="Liberation Sans,sans-serif" font-size="7.500" text-anchor="middle" fill="#555" letter-spacing="-.2">abc</text></svg>
<span class="t" style="left:534.4px;top:531.5px;font-weight:700;letter-spacing:0.14px;">editText2</span>
<svg style="left:717px;top:533px" width="14" height="14" viewBox="0 0 14 14"><circle cx="7" cy="7" r="7" fill="#c2405f"/><rect x="6" y="2.800" width="2" height="5.400" fill="#fff"/><rect x="6" y="9.400" width="2" height="2" fill="#fff"/></svg>
<svg style="left:516px;top:562px" width="13" height="12" viewBox="0 0 13 12"><defs><clipPath id="c516562"><rect width="13" height="12"/></clipPath></defs><g clip-path="url(#c516562)" stroke="#8e8e8e" stroke-width="2.100"><path d="M-2 5L5 -2M-2 10.500L10.500 -2M0 14L15 -1M5.500 14L15 4.500M11 14l4-4"/></g></svg>
<span class="t" style="left:534.4px;top:558.5px;font-weight:700;letter-spacing:-0.29px;">guideline</span>
<svg style="left:516px;top:589px" width="14" height="12" viewBox="0 0 14 12"><rect width="14" height="12" rx="1.500" fill="#dcdcdc"/><text x="7" y="9.300" font-family="Liberation Sans,sans-serif" font-size="8" font-weight="700" text-anchor="middle" fill="#1a1a1a">OK</text></svg>
<span class="t" style="left:534.4px;top:585.6px;font-weight:700;letter-spacing:0.08px;">button</span>
<span class="t" style="left:586.4px;top:585.6px;color:#9c9c9c;letter-spacing:0.17px;">- "@string/submit"</span>
<svg style="left:717px;top:587px" width="14" height="14" viewBox="0 0 14 14"><circle cx="7" cy="7" r="7" fill="#c2405f"/><rect x="6" y="2.800" width="2" height="5.400" fill="#fff"/><rect x="6" y="9.400" width="2" height="2" fill="#fff"/></svg>
<svg style="left:515px;top:614.5px" width="15" height="15" viewBox="0 0 15 15"><rect x=".500" y=".500" width="14" height="14" rx="1.500" fill="#fff" stroke="#a8a8a8"/><text x="7.500" y="10.300" font-family="Liberation Sans,sans-serif" font-size="7.500" text-anchor="middle" fill="#555" letter-spacing="-.2">abc</text></svg>
<span class="t" style="left:534.4px;top:612.6px;font-weight:700;letter-spacing:0.15px;">editText4</span>
<svg style="left:717px;top:614px" width="14" height="14" viewBox="0 0 14 14"><circle cx="7" cy="7" r="7" fill="#c2405f"/><rect x="6" y="2.800" width="2" height="5.400" fill="#fff"/><rect x="6" y="9.400" width="2" height="2" fill="#fff"/></svg>
<div class="a" style="left:736px;top:245px;width:1px;height:22px;background:#fff"></div><div class="vs" style="left:737px;top:245px;height:22px;background:#c2c2c2"></div>
<div class="a" style="left:738px;top:111px;width:652px;height:718px;background:#f2f2f2;overflow:hidden"></div>
<div class="a" style="left:808px;top:182px;width:327px;height:583px;background:#fafafa;box-shadow:0 0 3px rgba(0,0,0,.18)"></div>
<div class="a" style="left:808px;top:182px;width:327px;height:23px;background:#303f9f"></div>
<div class="a" style="left:808px;top:205px;width:327px;height:51px;background:#3f51b5"></div>
<svg style="left:1065px;top:186px" width="18" height="15" viewBox="0 0 18 15"><path d="M9 15L0 3.500a13 13 0 0 1 18 0z" fill="#fff"/></svg>
<svg style="left:1087px;top:186px" width="10" height="15" viewBox="0 0 10 15"><path d="M3 0h4v1.500h3V15H0V1.500h3z" fill="#fff"/></svg>
<span class="t" style="left:1102px;top:186.2px;font-size:14.5px;color:#fff;letter-spacing:-0.06px;-webkit-text-stroke:.4px #fff;">8:00</span>
<span class="t" style="left:826px;top:282.2px;font-size:16px;color:#a0a0a0;letter-spacing:0.18px;">First Name</span>
<div class="a" style="left:826px;top:304px;width:190px;height:1px;background:#7a7a7a"></div>
<span class="t" style="left:826px;top:340.6px;font-size:16px;color:#a0a0a0;letter-spacing:0.16px;">Last Name</span>
<div class="a" style="left:826px;top:362px;width:190px;height:1px;background:#7a7a7a"></div>
<span class="t" style="left:826px;top:409.2px;font-size:16px;color:#a0a0a0;letter-spacing:-0.16px;">Age</span>
<div class="a" style="left:826px;top:430px;width:190px;height:1px;background:#7a7a7a"></div>
<div class="a" style="left:931px;top:506px;width:81px;height:44px;border:1px solid #1a1ad6"></div>
<div class="a" style="left:935px;top:511px;width:73px;height:34px;background:#d6d7d7;border-radius:2px;box-shadow:0 1px 1.500px rgba(0,0,0,.3)"></div>
<span class="t" style="left:948.6px;top:519.2px;font-size:13.5px;color:#1a1a1a;letter-spacing:-0.94px;-webkit-text-stroke:.35px #1a1a1a;">SUBMIT</span>
<div class="a" style="left:1084px;top:670px;width:37px;height:37px;border-radius:50%;background:#ff4081;box-shadow:0 2px 4px rgba(0,0,0,.35)"></div>
<svg style="left:1093px;top:682px" width="19" height="13" viewBox="0 0 19 13"><rect width="19" height="13" rx="1" fill="#fff"/><path d="M1 1.500l8.500 6.500L18 1.500M1 12l6-5.500M18 12l-6-5.500" fill="none" stroke="#ff4081" stroke-width="1.300"/></svg>
<div class="a" style="left:808px;top:721px;width:327px;height:44px;background:#000"></div>
<svg style="left:855px;top:735px" width="16" height="16" viewBox="0 0 16 16"><path d="M14 1.200v13.600L1.800 8z" fill="none" stroke="#fff" stroke-width="1.800" stroke-linejoin="round"/></svg>
<svg style="left:963px;top:735px" width="16" height="16" viewBox="0 0 16 16"><circle cx="8" cy="8" r="6.800" fill="none" stroke="#fff" stroke-width="1.800"/></svg>
<svg style="left:1073px;top:736px" width="14" height="14" viewBox="0 0 14 14"><rect x="1" y="1" width="12" height="12" rx="1" fill="none" stroke="#fff" stroke-width="1.800"/></svg>
<div class="a" style="left:1145px;top:182px;width:245px;height:583px;background:#224d70;box-shadow:0 0 3px rgba(0,0,0,.18)"></div>
<div class="a" style="left:1145px;top:255px;width:245px;height:1px;background:#5e93c4"></div>
<div class="a" style="left:1145px;top:720px;width:245px;height:1px;background:#5e93c4"></div>
<div class="a" style="left:1159px;top:256px;width:1px;height:464px;background:repeating-linear-gradient(180deg,#5e8fbb 0 2px,transparent 2px 4px)"></div>
<div class="a" style="left:1159px;top:270px;width:198px;height:42px;background:#2b5a85;border:1px solid #5f9ad0"></div>
<div class="a" style="left:1159px;top:328px;width:198px;height:42px;background:#2b5a85;border:1px solid #5f9ad0"></div>
<div class="a" style="left:1159px;top:396px;width:198px;height:42px;background:#2b5a85;border:1px solid #5f9ad0"></div>
<svg style="left:1151px;top:240px" width="16" height="16" viewBox="0 0 16 16"><circle cx="8" cy="8" r="7.400" fill="#6d9fd0"/><path d="M5.500 3.500L12 8l-6.500 4.500z" fill="#e8f0fa"/></svg>
<div class="a" style="left:1273px;top:510px;width:71px;height:35px;background:#33679b"></div>
<div class="a" style="left:1268px;top:505px;width:81px;height:45px;border:1px solid #b7d3ee"></div>
<div class="a" style="left:1271px;top:508px;width:75px;height:39px;border:1px solid #b7d3ee"></div>
<span class="t" style="left:1288.4px;top:518.1px;font-size:11.5px;color:#7ba7d9;letter-spacing:-1.14px;">SUBMIT</span>
<svg style="left:0;top:0" width="1590" height="863"><rect x="1265.0" y="502.0" width="7" height="7" fill="#a9c9ea"/><rect x="1345.0" y="502.0" width="7" height="7" fill="#a9c9ea"/><rect x="1265.0" y="546.0" width="7" height="7" fill="#a9c9ea"/><rect x="1345.0" y="546.0" width="7" height="7" fill="#a9c9ea"/><circle cx="1308.5" cy="505.5" r="4.600" fill="#224d70" stroke="#b7d3ee" stroke-width="1.300"/><circle cx="1308.5" cy="549.5" r="4.600" fill="#224d70" stroke="#b7d3ee" stroke-width="1.300"/><circle cx="1268.5" cy="527.5" r="4.600" fill="#224d70" stroke="#b7d3ee" stroke-width="1.300"/><circle cx="1348.5" cy="527.5" r="4.600" fill="#224d70" stroke="#b7d3ee" stroke-width="1.300"/><path d="M1139.500 785.500L1156 769.500M1147.500 785.500L1156 777" stroke="#555" stroke-width="1"/></svg>
<div class="a" style="left:738px;top:820px;width:543px;height:9px;background:#dcdcdc"></div>
<div class="a" style="left:1390px;top:57px;width:200px;height:772px;background:#e8e8e8"></div>
<div class="vs" style="left:1389px;top:57px;height:772px;background:#bdbdbd"></div>
<div class="hs" style="left:1390px;top:81px;width:200px;background:#c6c6c6"></div>
<span class="t" style="left:1395.3px;top:58.9px;font-size:14px;letter-spacing:-0.38px;">Attributes</span>
<svg style="left:1516.5px;top:61px" width="15" height="15" viewBox="0 0 15 15"><circle cx="5.8" cy="5.8" r="4.6" fill="none" stroke="#6a6a6a" stroke-width="1.6"/><path d="M9.2 9.2L14 14" stroke="#6a6a6a" stroke-width="2.2"/></svg>
<svg style="left:1542px;top:62px" width="15" height="13" viewBox="0 0 15 13"><path d="M3 4h11M14 4l-3.500-3.500M1 9h11M1 9l3.500 3.500" fill="none" stroke="#5c5c5c" stroke-width="1.500"/><path d="M10 0l4.500 4H10zM5 13L.500 9H5z" fill="#5c5c5c"/></svg>
<div class="vs" style="left:1562px;top:61px;height:17px;background:#b5b5b5"></div>
<svg style="left:1566px;top:62px" width="14" height="14" viewBox="-7 -7 14 14"><g fill="#5c5c5c"><rect x="-1.4" y="-6.3" width="2.8" height="3" transform="rotate(0)"/><rect x="-1.4" y="-6.3" width="2.8" height="3" transform="rotate(45)"/><rect x="-1.4" y="-6.3" width="2.8" height="3" transform="rotate(90)"/><rect x="-1.4" y="-6.3" width="2.8" height="3" transform="rotate(135)"/><rect x="-1.4" y="-6.3" width="2.8" height="3" transform="rotate(180)"/><rect x="-1.4" y="-6.3" width="2.8" height="3" transform="rotate(225)"/><rect x="-1.4" y="-6.3" width="2.8" height="3" transform="rotate(270)"/><rect x="-1.4" y="-6.3" width="2.8" height="3" transform="rotate(315)"/><circle r="4.6"/></g><circle r="1.9" fill="#e8e8e8"/></svg><i class="dd" style="left:1581px;top:68px;border-left-width:2.5px;border-right-width:2.5px;border-top-width:3px;border-top-color:#5c5c5c"></i>
<span class="t" style="left:1396.2px;top:88.2px;font-size:16px;letter-spacing:-0.60px;">ID</span>
<div class="inp" style="left:1481px;top:85px;width:120px;height:24px"></div>
<span class="t" style="left:1487.8px;top:87.7px;color:#1a1aff;letter-spacing:0.25px;">button</span>
<svg style="left:0;top:0" width="1590" height="863"><rect x="1462.500" y="166.500" width="88" height="88" fill="#dcdcdc" stroke="#000" stroke-width="1"/><path d="M1506.500 144V166M1506.500 255V277M1440 211.500H1462M1551 211.500H1573" stroke="#555" stroke-width="1" stroke-dasharray="2 2"/><circle cx="1506.5" cy="136.5" r="7.300" fill="#4a82d2"/><path d="M1502.0 136.5h9M1506.5 132.0v9" stroke="#fff" stroke-width="1.400"/><circle cx="1506.5" cy="284.5" r="7.300" fill="#4a82d2"/><path d="M1502.0 284.5h9M1506.5 280.0v9" stroke="#fff" stroke-width="1.400"/><circle cx="1432.5" cy="211.5" r="7.300" fill="#4a82d2"/><path d="M1428.0 211.5h9M1432.5 207.0v9" stroke="#fff" stroke-width="1.400"/><circle cx="1580.5" cy="211.5" r="7.300" fill="#4a82d2"/><path d="M1576.0 211.5h9M1580.5 207.0v9" stroke="#fff" stroke-width="1.400"/><g fill="none" stroke="#4a82d2" stroke-width="1.100"><path d="M1502.500 180l4 3.500 4-3.500M1502.500 186l4 3.500 4-3.500"/><path d="M1502.500 240.500l4-3.500 4 3.500M1502.500 246.500l4-3.500 4 3.500"/><path d="M1475.500 207.500l3.500 4-3.500 4M1482 207.500l3.500 4-3.500 4"/><path d="M1528.500 207.500l-3.500 4 3.500 4M1535.500 207.500l-3.500 4 3.500 4"/></g></svg>
<div class="a" style="left:1390px;top:333px;width:86px;height:24px;overflow:hidden"><span class="t" style="left:6.2px;top:2.2px;letter-spacing:-0.09px;">layout_width</span></div>
<div class="cb" style="left:1481px;top:330px;width:92px;height:28px"><i style="left:67px;right:auto;width:24px"></i><div class="a" style="left:2.500px;top:0;width:64.5px;height:100%;overflow:hidden"><span class="t" style="left:-21.5px;top:4.2px;color:#1a1aff;letter-spacing:-0.59px;">wrap_content</span></div></div>
<i class="dots" style="left:1580px;top:343px"></i>
<div class="a" style="left:1390px;top:365.8px;width:86px;height:24px;overflow:hidden"><span class="t" style="left:6.2px;top:2.2px;letter-spacing:-0.15px;">layout_height</span></div>
<div class="cb" style="left:1481px;top:363px;width:92px;height:28px"><i style="left:67px;right:auto;width:24px"></i><div class="a" style="left:2.500px;top:0;width:64.5px;height:100%;overflow:hidden"><span class="t" style="left:-21.5px;top:4.0px;color:#1a1aff;letter-spacing:-0.59px;">wrap_content</span></div></div>
<i class="dots" style="left:1580px;top:376px"></i>
<div class="hs" style="left:1396px;top:394px;width:194px;background:#c9c9c9"></div>
<div class="a" style="left:1390px;top:395px;width:86px;height:24px;overflow:hidden"><span class="t" style="left:6.2px;top:2.2px;font-weight:700;letter-spacing:0.08px;">Button</span></div>
<div class="a" style="left:1390px;top:422.2px;width:86px;height:24px;overflow:hidden"><span class="t" style="left:6.2px;top:2.2px;letter-spacing:-0.11px;">style</span></div>
<div class="cb" style="left:1481px;top:419px;width:92px;height:28px"><i style="left:67px;right:auto;width:24px"></i><div class="a" style="left:2.500px;top:0;width:64.5px;height:100%;overflow:hidden"><span class="t" style="left:-14px;top:4.4px;color:#8c8c8c;letter-spacing:-0.01px;">buttonStyle</span></div></div>
<i class="dots" style="left:1580px;top:432px"></i>
<div class="a" style="left:1390px;top:453px;width:86px;height:24px;overflow:hidden"><span class="t" style="left:6.2px;top:2.2px;letter-spacing:0.04px;">background</span></div>
<div class="inp" style="left:1481px;top:452px;width:92px;height:24px"></div>
<i class="dots" style="left:1580px;top:463px"></i>
<div class="a" style="left:1390px;top:482.3px;width:86px;height:24px;overflow:hidden"><span class="t" style="left:6.2px;top:2.2px;letter-spacing:0.28px;">backgroundTint</span></div>
<div class="inp" style="left:1481px;top:481px;width:92px;height:24px"></div>
<i class="dots" style="left:1580px;top:492px"></i>
<div class="a" style="left:1390px;top:511.20000000000005px;width:86px;height:24px;overflow:hidden"><span class="t" style="left:6.2px;top:2.2px;letter-spacing:-0.18px;">stateListAnimator</span></div>
<div class="inp" style="left:1481px;top:510px;width:92px;height:24px"></div>
<i class="dots" style="left:1580px;top:521px"></i>
<div class="a" style="left:1390px;top:540px;width:86px;height:24px;overflow:hidden"><span class="t" style="left:6.2px;top:2.2px;letter-spacing:0.04px;">elevation</span></div>
<div class="inp" style="left:1481px;top:539px;width:92px;height:24px"></div>
<i class="dots" style="left:1580px;top:550px"></i>
<div class="a" style="left:1390px;top:570.3px;width:86px;height:24px;overflow:hidden"><span class="t" style="left:6.2px;top:2.2px;letter-spacing:0.19px;">visibility</span></div>
<div class="cb" style="left:1481px;top:568px;width:130px;height:28px"><i style="left:90px;right:auto;width:39px"></i><div class="a" style="left:2.500px;top:0;width:87.5px;height:100%;overflow:hidden"><span class="t" style="left:1px;top:3.5px;color:#8c8c8c;letter-spacing:-0.34px;">none</span></div></div>
<div class="a" style="left:1390px;top:603.3px;width:86px;height:24px;overflow:hidden"><span class="t" style="left:6.2px;top:2.2px;letter-spacing:-0.17px;">onClick</span></div>
<div class="cb" style="left:1481px;top:601px;width:130px;height:28px"><i style="left:90px;right:auto;width:39px"></i><div class="a" style="left:2.500px;top:0;width:87.5px;height:100%;overflow:hidden"><span class="t" style="left:1px;top:3.5px;color:#8c8c8c;letter-spacing:-0.34px;">none</span></div></div>
<div class="hs" style="left:1396px;top:631px;width:194px;background:#c9c9c9"></div>
<div class="a" style="left:1390px;top:632.7px;width:86px;height:24px;overflow:hidden"><span class="t" style="left:6.2px;top:2.2px;font-weight:700;letter-spacing:0.09px;">TextView</span></div>
<div class="a" style="left:1390px;top:657.7px;width:86px;height:24px;overflow:hidden"><span class="t" style="left:6.2px;top:2.2px;letter-spacing:0.03px;">text</span></div>
<div class="inp" style="left:1481px;top:657px;width:92px;height:24px"></div>
<i class="dots" style="left:1580px;top:668px"></i>
<span class="t" style="left:1488px;top:660.1px;color:#1a1aff;letter-spacing:-0.21px;">@string/sub</span>
<svg style="left:1396px;top:692px" width="12" height="12" viewBox="0 0 12 12"><path d="M1.200 10.800L7 5" stroke="#7c7c7c" stroke-width="2.400" stroke-linecap="round"/><path d="M11.700 2.800a3.300 3.300 0 1 1-2.500-2.500L7.400 2.100l.5 2 2 .5z" fill="#7c7c7c"/></svg>
<div class="a" style="left:1390px;top:686.5px;width:86px;height:24px;overflow:hidden"><span class="t" style="left:22.3px;top:2.2px;letter-spacing:0.13px;">text</span></div>
<div class="inp" style="left:1481px;top:686px;width:92px;height:24px"></div>
<i class="dots" style="left:1580px;top:697px"></i>
<div class="a" style="left:1390px;top:716.2px;width:86px;height:24px;overflow:hidden"><span class="t" style="left:6.2px;top:2.2px;letter-spacing:-0.08px;">contentDescription</span></div>
<div class="inp" style="left:1481px;top:715px;width:92px;height:24px"></div>
<i class="dots" style="left:1580px;top:726px"></i>
<svg style="left:1397px;top:753px" width="8" height="10" viewBox="0 0 8 10"><path d="M.5 .5L7.500 5 .5 9.500z" fill="#b9b9b9" stroke="#a4a4a4" stroke-width=".600"/></svg>
<div class="a" style="left:1390px;top:745.8px;width:86px;height:24px;overflow:hidden"><span class="t" style="left:21px;top:2.2px;letter-spacing:-0.15px;">textAppearance</span></div>
<div class="cb" style="left:1481px;top:744px;width:130px;height:28px"><i style="left:90px;right:auto;width:39px"></i><div class="a" style="left:2.500px;top:0;width:87.5px;height:100%;overflow:hidden"><span class="t" style="left:-10.5px;top:3.0px;color:#8c8c8c;letter-spacing:-0.06px;">Widget.Button</span></div></div>
<div class="hs" style="left:1396px;top:774px;width:194px;background:#c9c9c9"></div>
<span class="t" style="left:1396.2px;top:777.9px;font-weight:700;letter-spacing:-0.01px;">Favorite Attributes</span>
<div class="a" style="left:1390px;top:802.5px;width:86px;height:24px;overflow:hidden"><span class="t" style="left:6.2px;top:2.2px;letter-spacing:0.19px;">visibility</span></div>
<div class="cb" style="left:1481px;top:800.5px;width:130px;height:27.0px"><i style="left:90px;right:auto;width:39px"></i><div class="a" style="left:2.500px;top:0;width:87.5px;height:100%;overflow:hidden"><span class="t" style="left:1px;top:3.2px;color:#8c8c8c;letter-spacing:-0.34px;">none</span></div></div>
<div class="hs" style="left:467px;top:829px;width:1123px;background:#b9b9b9"></div>
<div class="a" style="left:467px;top:830px;width:1123px;height:3px;background:#fafafa"></div>
<div class="a" style="left:467px;top:833px;width:1123px;height:30px;background:#e8e8e8;border-top:1px solid #bdbdbd"></div>
<div class="a" style="left:467px;top:833px;width:10px;height:30px;background:#e8e8e8;border-top:1px solid #bdbdbd;border-right:1px solid #c6c6c6"></div>
<div class="a" style="left:477px;top:830px;width:60px;height:33px;background:#fff"></div>
<div class="a" style="left:537px;top:833px;width:51px;height:30px;background:#d4d4d4;border:1px solid #b4b4b4;border-bottom:none"></div>
<span class="t" style="left:486.4px;top:838.9px;font-size:16px;letter-spacing:-0.70px;">Design</span>
<span class="t" style="left:550.4px;top:838.9px;font-size:16px;color:#2b2b2b;letter-spacing:-0.54px;">Text</span>
<div class="a" style="left:243px;top:52px;width:223px;height:811px;background:#fff"></div>
<div class="a" style="left:243px;top:377px;width:179.500px;height:24px;background:#d4d4d4"></div>
<span class="t" style="left:398px;top:206.4px;letter-spacing:-0.13px;">main</span>
<span class="t" style="left:398px;top:231.8px;letter-spacing:-0.13px;">main</span>
<span class="t" style="left:396.5px;top:355.6px;letter-spacing:-0.11px;">xml</span>
<div class="a" style="left:27px;top:56px;width:383px;height:802px;border-radius:37px 35px 38px 38px;background:linear-gradient(180deg,#adaba8 0,#a3a3a3 1.500%,#929292 30%,#7c7c7c 55%,#505050 78%,#2d2d2d 93%,#3c3c3c 100%)"></div>
<div class="a" style="left:31.300px;top:58.500px;width:374.200px;height:797.500px;border-radius:33px 31px 36px 36px;background:linear-gradient(180deg,#4a4a4a 0,#3e3e3e 50%,#2a2a2a 85%,#262626 100%)"></div>
<div class="a" style="left:409px;top:266px;width:4px;height:53px;border-radius:0 2px 2px 0;background:linear-gradient(90deg,#6a6a6a,#a0a0a0 60%,#777)"></div>
<div class="a" style="left:409px;top:386px;width:4px;height:109px;border-radius:0 2px 2px 0;background:linear-gradient(90deg,#6a6a6a,#a0a0a0 60%,#777)"></div>
<div class="a" style="left:35px;top:62.500px;width:366px;height:791px;border-radius:31px 30px 33px 33px;background:linear-gradient(180deg,#000 0,#000 93%,#0b0b0b 96.500%,#202020 100%);box-shadow:0 0 2px 1.500px rgba(0,0,0,.9)"></div>
<svg style="left:0;top:0" width="1590" height="863"><defs><linearGradient id="hl" x1="0" x2="1" y1="0" y2="0"><stop offset="0" stop-color="#7a8894" stop-opacity="0"/><stop offset=".12" stop-color="#7a8894"/><stop offset=".85" stop-color="#8a96a0"/><stop offset="1" stop-color="#8a96a0" stop-opacity=".2"/></linearGradient></defs><path d="M78 65H362C376 65 385 68.500 390 75.500" fill="none" stroke="url(#hl)" stroke-width="2"/></svg>
<div class="a" style="left:207px;top:73px;width:25px;height:10px;border-radius:5px;background:#07070b"></div>
<div class="a" style="left:86px;top:96px;width:17px;height:17px;border-radius:50%;background:radial-gradient(circle at 52% 55%,#6d86f0 0,#3245a8 12%,#10163a 28%,#0b0b12 45%,#17171c 75%,#202026 100%)"></div>
<div class="a" style="left:146px;top:99px;width:146px;height:9px;border-radius:5px;background:#1a1a18;border:1px solid #262624"></div>
<div class="a" style="left:151px;top:102px;width:136px;height:3px;background:repeating-linear-gradient(90deg,#34342f 0 2px,#1a1a18 2px 4px)"></div>
<div class="a" style="left:144px;top:810px;width:145px;height:9px;border-radius:5px;background:#1a1a18;border:1px solid #262624"></div>
<div class="a" style="left:149px;top:813px;width:135px;height:3px;background:repeating-linear-gradient(90deg,#34342f 0 2px,#1a1a18 2px 4px)"></div>
<div class="a" style="left:44px;top:146px;width:350px;height:581px;background:#fafafa"></div>
<div class="a" style="left:44px;top:146px;width:350px;height:20px;background:#303f9f"></div>
<div class="a" style="left:44px;top:166px;width:350px;height:47px;background:#3f51b5;box-shadow:0 1px 3px rgba(0,0,0,.4)"></div>
<svg style="left:54px;top:150px" width="10.300" height="12.500" viewBox="0 0 11 13"><path d="M3.500 0H9.500a1.500 1.500 0 0 1 1.500 1.500V11.500a1.500 1.500 0 0 1-1.500 1.500H1.500A1.500 1.500 0 0 1 0 11.500V3.500z" fill="#fff"/><path d="M4.500 1.500v2.500M6.500 1.500v2.500M8.500 1.500v2.500" stroke="#303f9f" stroke-width="1"/></svg>
<svg style="left:73px;top:150.500px" width="12.800" height="11.500" viewBox="0 0 14 12"><path d="M0 12V0h2.500L14 9.500V12h-2.500L0 2.500z" fill="#c5cae9"/><path d="M0 0h3l11 9.500V12h-3L0 2.500z" fill="#fff"/><path d="M10.500 0H14v7.500l-3.500-3z" fill="#fff"/><path d="M0 12V4.500l3.500 3V12z" fill="#9fa8da"/></svg>
<svg style="left:327px;top:149px" width="16" height="14" viewBox="0 0 16 14"><path d="M15 2v12H3z" fill="#7986cb"/><path d="M11 6v8H3z" fill="#fff"/><text x="0" y="5" font-family="Liberation Sans,sans-serif" font-size="5.500" font-weight="700" fill="#fff" letter-spacing="-.5">LTE</text></svg>
<svg style="left:349px;top:149px" width="9" height="14" viewBox="0 0 9 14"><path d="M2.500 0h4v1.500H9V14H0V1.500h2.500z" fill="#fff"/><path d="M5.500 3.500L2.500 8h2v3.500L7 7H5z" fill="#303f9f"/></svg>
<span class="t" style="left:363.7px;top:146.5px;font-size:13px;color:#fff;letter-spacing:-0.63px;-webkit-text-stroke:.35px #fff;">1:43</span>
<span class="t" style="left:57.8px;top:180.8px;font-size:17.5px;color:#fff;letter-spacing:-0.47px;-webkit-text-stroke:.4px #fff;">Exercise1</span>
<svg style="left:372px;top:183px" width="6" height="16" viewBox="0 0 6 16"><circle cx="3" cy="2.300" r="1.700" fill="#fff"/><circle cx="3" cy="7.500" r="1.700" fill="#fff"/><circle cx="3" cy="12.700" r="1.700" fill="#fff"/></svg>
<span class="t" style="left:112.3px;top:223.0px;color:#9a9a9a;letter-spacing:-0.14px;">e</span>
<div class="a" style="left:115px;top:244.200px;width:104px;height:1.600px;background:#d8265f"></div>
<div class="a" style="left:47px;top:219px;width:68px;height:31px;background:#d6d7d7;border-radius:2px;box-shadow:0 1px 2px rgba(0,0,0,.28)"></div>
<span class="t" style="left:59.8px;top:224.5px;font-size:13.5px;color:#212121;letter-spacing:-1.20px;-webkit-text-stroke:.3px #212121;">SUBMIT</span>
<div class="a" style="left:333px;top:665.500px;width:47px;height:47px;border-radius:50%;background:#ff4081;box-shadow:0 3px 5px rgba(0,0,0,.35)"></div>
<svg style="left:346px;top:681px" width="21" height="15" viewBox="0 0 21 15"><rect width="21" height="15" rx="1" fill="#fce4ec"/><path d="M1 1.500l9.500 7.500L20 1.500M1 14l7-6.500M20 14l-7-6.500" fill="none" stroke="#ff4081" stroke-width="1.400"/></svg>
<svg style="left:112px;top:739px" width="16" height="16" viewBox="0 0 16 16"><path d="M14 1.300v13.400L2 8z" fill="none" stroke="#fff" stroke-width="1.700" stroke-linejoin="round"/></svg>
<svg style="left:210px;top:739px" width="16" height="16" viewBox="0 0 16 16"><circle cx="8" cy="8" r="6.800" fill="none" stroke="#fff" stroke-width="1.700"/></svg>
<svg style="left:310px;top:740px" width="14" height="14" viewBox="0 0 14 14"><rect x="1" y="1" width="12" height="12" rx="1" fill="none" stroke="#fff" stroke-width="1.700"/></svg>
<div class="a" style="left:423px;top:56px;width:69px;height:608px;background:#efefef;border:1px solid #000;box-shadow:-1px 0 0 #fff"></div>
<svg style="left:0;top:0" width="1590" height="863"><path d="M438 73.500h9.500" stroke="#607d8b" stroke-width="1.300"/><path d="M467 69.300l8.500 8.500M475.500 69.300l-8.500 8.500" stroke="#607d8b" stroke-width="1.400"/><path d="M450.800 104.300a10.400 10.400 0 1 0 12.400 0" fill="none" stroke="#607d8b" stroke-width="2.600"/><path d="M457 101.300v12.700" stroke="#607d8b" stroke-width="2.600"/><path d="M445.500 161h5l6.500-6.500v21l-6.500-6.500h-5z" fill="#607d8b"/><path d="M460 160.500a5 5 0 0 1 0 9z" fill="#607d8b"/><path d="M460 154.500a10.700 10.700 0 0 1 0 21" fill="none" stroke="#607d8b" stroke-width="2.300"/><path d="M448 213h5l6.500-6.500v21l-6.500-6.500h-5z" fill="#607d8b"/><path d="M462 212.500a5 5 0 0 1 0 9z" fill="#607d8b"/><g transform="translate(456.800 269.600)"><g transform="rotate(45)"><rect x="-12.100" y="-7.200" width="24.200" height="14.400" rx="2" fill="#607d8b"/><rect x="-8.300" y="-5.500" width="16.600" height="11" fill="#efefef"/></g><path d="M1 -14.600A14.700 14.700 0 0 1 14.600 -1.800" fill="none" stroke="#607d8b" stroke-width="1.800"/><path d="M-1 -16.200L4 -16 2 -11.500z" fill="#607d8b"/></g><g transform="translate(456.800 321.500) scale(-1 1)"><g transform="rotate(45)"><rect x="-12.100" y="-7.200" width="24.200" height="14.400" rx="2" fill="#607d8b"/><rect x="-8.300" y="-5.500" width="16.600" height="11" fill="#efefef"/></g><path d="M1 -14.600A14.700 14.700 0 0 1 14.600 -1.800" fill="none" stroke="#607d8b" stroke-width="1.800"/><path d="M-1 -16.200L4 -16 2 -11.500z" fill="#607d8b"/></g><path d="M452.500 360.500h9l2 3h4a2 2 0 0 1 2 2v15.500a2 2 0 0 1-2 2h-21a2 2 0 0 1-2-2V365.500a2 2 0 0 1 2-2h4z" fill="#607d8b"/><circle cx="457" cy="373" r="5.200" fill="none" stroke="#efefef" stroke-width="2.300"/><circle cx="454.500" cy="422" r="7.200" fill="none" stroke="#607d8b" stroke-width="1.900"/><path d="M459.800 427.300l7.200 7.200" stroke="#607d8b" stroke-width="2.400"/><path d="M451 422h7M454.500 418.500v7" stroke="#607d8b" stroke-width="1.400"/><path d="M463.500 469.500v16L450.500 477.500z" fill="none" stroke="#607d8b" stroke-width="1.800" stroke-linejoin="round"/><circle cx="456.800" cy="528.800" r="7.700" fill="none" stroke="#607d8b" stroke-width="1.800"/><rect x="448.700" y="573.500" width="16.500" height="15.500" rx="1" fill="none" stroke="#607d8b" stroke-width="1.800"/><circle cx="449.300" cy="633" r="2.200" fill="#607d8b"/><circle cx="456.800" cy="633" r="2.200" fill="#607d8b"/><circle cx="464.300" cy="633" r="2.200" fill="#607d8b"/></svg>
</body>
</html>
